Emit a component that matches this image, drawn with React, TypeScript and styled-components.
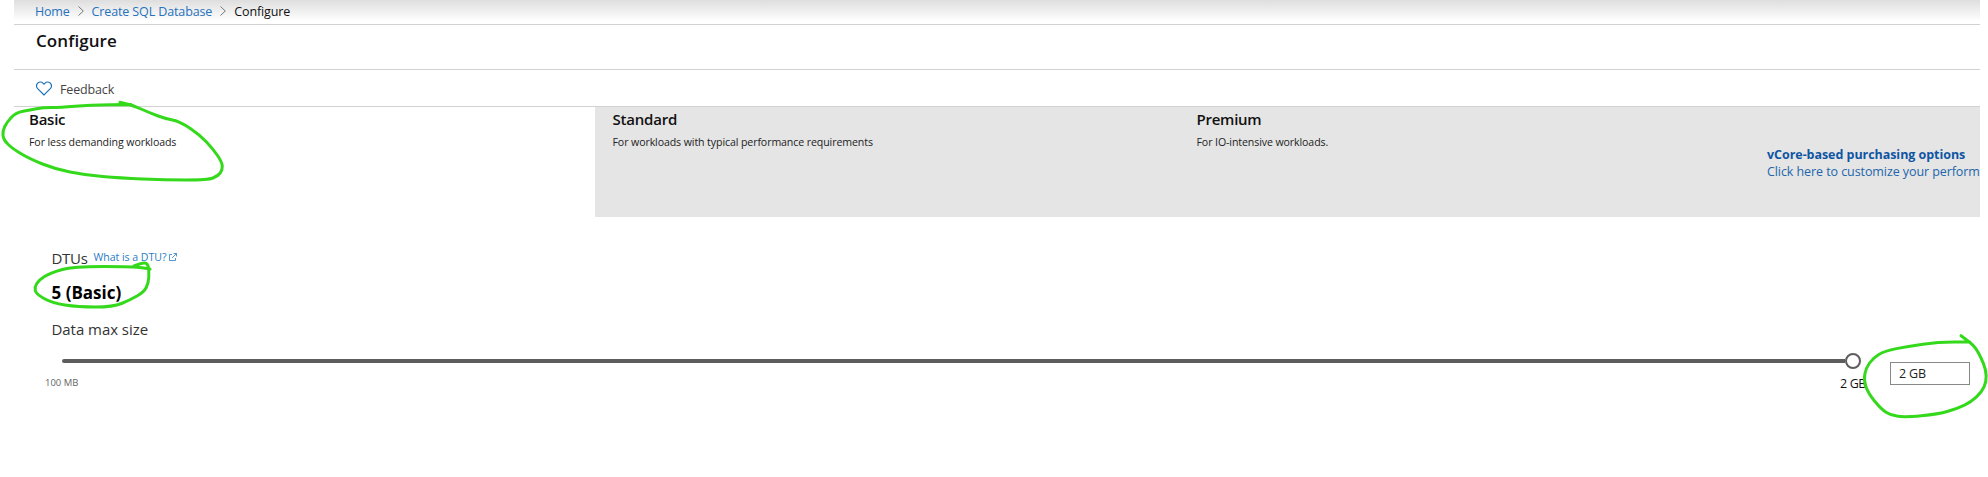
import React from 'react';
import styled, { createGlobalStyle } from 'styled-components';

const GlobalStyle = createGlobalStyle`
  body {
    margin: 0;
    background: #fff;
    overflow: hidden;
    font-family: "Open Sans", "Noto Sans", sans-serif;
    color: #111;
  }
`;

const Page = styled.div`
  position: relative;
  box-sizing: border-box;
  width: 1988px;
  height: 477px;
  padding: 0 8px 0 14px;
  overflow: hidden;
  white-space: nowrap;
`;

const Blade = styled.main`
  width: 1966px;
`;

const Breadcrumb = styled.nav`
  display: flex;
  box-sizing: border-box;
  height: 25px;
  padding-left: 21px;
  border-bottom: 1px solid #d2d2d2;
  background: linear-gradient(#dedede, #fff 21px);
  font-size: 12.5px;
  line-height: 24px;
`;

const Crumb = styled.a<{ $spacing: number }>`
  color: #2672bd;
  letter-spacing: ${(p) => p.$spacing}px;
`;

const CurrentCrumb = styled.span`
  color: #111;
  letter-spacing: -0.12px;
`;

const Chevron = styled.svg`
  width: 6px;
  height: 10px;
  margin: 6px 8px 0 8px;
  fill: none;
  stroke: #777;
`;

const BladeHeader = styled.header`
  box-sizing: border-box;
  height: 45px;
  padding-left: 22px;
  border-bottom: 1px solid #d2d2d2;
`;

const Title = styled.h1`
  margin: 0;
  font-size: 17px;
  font-weight: 600;
  line-height: 31px;
  letter-spacing: 0.08px;
`;

const CommandBar = styled.div`
  display: flex;
  box-sizing: border-box;
  height: 37px;
  padding: 2px 0 0 22px;
  border-bottom: 1px solid #d2d2d2;
`;

const FeedbackButton = styled.div`
  display: flex;
  gap: 8px;
  color: #444;
  font-size: 12.5px;
  letter-spacing: -0.15px;
  line-height: 35px;
`;

const Heart = styled.svg`
  width: 16px;
  height: 15px;
  margin-top: 9px;
  fill: none;
  stroke: #1f72b8;
  stroke-width: 1.2;
`;

const Tiers = styled.section`
  display: grid;
  grid-template-columns: 581px 584px 571px 230px;
  height: 110px;
`;

const Tier = styled.article<{ $selected?: boolean }>`
  padding-left: ${(p) => (p.$selected ? 15 : 17.5)}px;
  background: ${(p) => (p.$selected ? '#fff' : '#e5e5e5')};
`;

const TierName = styled.h2<{ $spacing: number }>`
  margin: 0;
  font-size: 15px;
  font-weight: 600;
  line-height: 24px;
  letter-spacing: ${(p) => p.$spacing}px;
`;

const TierText = styled.p`
  margin: 0;
  color: #222;
  font-size: 10.6px;
  line-height: 22px;
  letter-spacing: -0.1px;
`;

const VCoreLink = styled.a`
  display: flex;
  flex-direction: column;
  padding: 39px 0 0 17px;
  background: #e5e5e5;
  color: #2265ab;
  font-size: 12.5px;
  line-height: 17px;
  letter-spacing: -0.08px;
`;

const VCoreTitle = styled.strong`
  color: #0f55a3;
  font-weight: 700;
  letter-spacing: -0.05px;
`;

const Settings = styled.section`
  padding: 30px 0 0 37.5px;
`;

const DtuRow = styled.div`
  display: flex;
  align-items: flex-start;
  height: 22px;
`;

const Label = styled.div<{ $spacing: number }>`
  color: #333;
  font-size: 15px;
  line-height: 22px;
  letter-spacing: ${(p) => p.$spacing}px;
`;

const HelpLink = styled.a`
  display: flex;
  gap: 3px;
  margin-left: 6px;
  color: #2b7cc4;
  font-size: 10.6px;
  line-height: 20px;
  letter-spacing: -0.05px;
`;

const ExternalIcon = styled.svg`
  width: 8px;
  height: 8px;
  margin-top: 6px;
  fill: none;
  stroke: currentColor;
  stroke-width: 0.8;
`;

const DtuValue = styled.div`
  margin: 12px 0 13px;
  color: #000;
  font-size: 17px;
  font-weight: 700;
  line-height: 24px;
`;

const SizeRow = styled.div`
  display: flex;
  align-items: flex-start;
  padding-top: 13px;
`;

const Slider = styled.div`
  width: 1821px;
  margin-left: -6.5px;
`;

const Rail = styled.div`
  display: flex;
  align-items: center;
  height: 16px;
  margin-left: 17px;
  width: 1799px;
`;

const Track = styled.div`
  flex: 1;
  height: 4px;
  border-radius: 2px 0 0 2px;
  background: #5d5d5d;
`;

const Thumb = styled.div`
  box-sizing: border-box;
  width: 16px;
  height: 16px;
  border: 2px solid #5d5d5d;
  border-radius: 50%;
  background: #fff;
`;

const Limits = styled.div`
  display: flex;
  justify-content: space-between;
  height: 24px;
  padding-top: 4px;
`;

const MinLimit = styled.span`
  color: #666;
  font-size: 9.5px;
  line-height: 20px;
`;

const MaxLimit = styled.span`
  margin-top: 1px;
  font-size: 12.5px;
  font-weight: 500;
  line-height: 20px;
  letter-spacing: -0.4px;
`;

const SizeField = styled.div`
  box-sizing: border-box;
  width: 80px;
  height: 23px;
  margin: 9px 0 0 24px;
  padding-left: 8px;
  border: 1px solid #888;
  color: #222;
  font-size: 12.5px;
  line-height: 21px;
  letter-spacing: -0.2px;
`;

const Ink = styled.svg`
  position: absolute;
  inset: 0;
  pointer-events: none;
  fill: none;
  stroke: #35d91c;
  stroke-width: 3;
  stroke-linecap: round;
  stroke-linejoin: round;
`;

type Point = [number, number];

const circles: Point[][] = [
  [[120,102.3],[131,104.5],[150,113],[165,118.5],[180,121.5],[200,135],[213,149],[222,162],[222.5,170],[218,176],[208,180],[165,180],[120,178],[85,175],[55,169],[30,159],[13,149],[3.5,140],[2.5,131],[7,122],[16,112.5],[30,110],[43,107.5],[60,107.5],[90,105],[131,104.5]],
  [[134,266],[143,262.3],[148,264],[149,272],[148.5,283],[144,292],[130,300],[113,307],[78,307],[52,303],[36,294],[34.5,287],[39,280],[50,273],[73,266.5],[134,266.5],[150,269]],
  [[1961,335.7],[1969.7,342],[1976,348.3],[1981.3,358.3],[1986,370],[1986.3,381.7],[1982,391.7],[1971,402],[1958,408.3],[1938,414.3],[1904.7,417.3],[1891,415.3],[1881,409],[1868,393],[1863.7,380],[1866,368],[1873,358],[1884.7,351],[1908,346.3],[1938,342],[1970,342]],
];

// Joins the midpoints with quadratic curves for a freehand stroke.
const stroke = (pts: Point[]) =>
  pts.slice(1, -1).reduce(
    (d, [x, y], i) => {
      const [nx, ny] = pts[i + 2];
      return `${d} Q${x} ${y} ${(x + nx) / 2} ${(y + ny) / 2}`;
    },
    `M${pts[0].join(' ')}`,
  ) + ` L${pts[pts.length - 1].join(' ')}`;

const Separator = () => (
  <Chevron viewBox="0 0 6 10"><path d="M.5 .5 5.3 5 .5 9.5" /></Chevron>
);

export default function App() {
  return (
    <Page>
      <GlobalStyle />
      <Blade>
        <Breadcrumb>
          <Crumb $spacing={-0.2}>Home</Crumb>
          <Separator />
          <Crumb $spacing={-0.12}>Create SQL Database</Crumb>
          <Separator />
          <CurrentCrumb>Configure</CurrentCrumb>
        </Breadcrumb>
        <BladeHeader><Title>Configure</Title></BladeHeader>
        <CommandBar>
          <FeedbackButton>
            <Heart viewBox="0 0 16 15">
              <path d="M8 14 1.7 7.6C.3 6.1.3 3.7 1.7 2.1 3.2.6 5.6.6 7 2.1l1 1 1-1c1.4-1.5 3.8-1.5 5.3 0 1.4 1.6 1.4 4 0 5.5Z" />
            </Heart>
            Feedback
          </FeedbackButton>
        </CommandBar>
        <Tiers>
          <Tier $selected>
            <TierName $spacing={-0.25}>Basic</TierName>
            <TierText>For less demanding workloads</TierText>
          </Tier>
          <Tier>
            <TierName $spacing={-0.2}>Standard</TierName>
            <TierText>For workloads with typical performance requirements</TierText>
          </Tier>
          <Tier>
            <TierName $spacing={-0.25}>Premium</TierName>
            <TierText>For IO-intensive workloads.</TierText>
          </Tier>
          <VCoreLink>
            <VCoreTitle>vCore-based purchasing options</VCoreTitle>
            <span>Click here to customize your perform</span>
          </VCoreLink>
        </Tiers>
        <Settings>
          <DtuRow>
            <Label $spacing={-0.3}>DTUs</Label>
            <HelpLink>
              What is a DTU?
              <ExternalIcon viewBox="0 0 8 8">
                <path d="M3 1.5H.5v6h6V5M4.5.5h3v3M7.5.5l-4.5 4.5" />
              </ExternalIcon>
            </HelpLink>
          </DtuRow>
          <DtuValue>5 (Basic)</DtuValue>
          <Label $spacing={-0.05}>Data max size</Label>
          <SizeRow>
            <Slider>
              <Rail><Track /><Thumb /></Rail>
              <Limits>
                <MinLimit>100 MB</MinLimit>
                <MaxLimit>2 GB</MaxLimit>
              </Limits>
            </Slider>
            <SizeField>2 GB</SizeField>
          </SizeRow>
        </Settings>
      </Blade>
      <Ink width="1988" height="477" viewBox="0 0 1988 477">
        {circles.map((pts, i) => <path key={i} d={stroke(pts)} />)}
      </Ink>
    </Page>
  );
}
